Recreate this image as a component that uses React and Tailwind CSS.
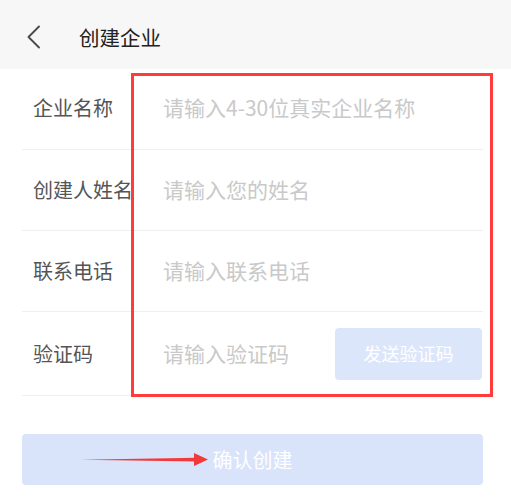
const rows = [
  { label: '企业名称', placeholder: '请输入4-30位真实企业名称' },
  { label: '创建人姓名', placeholder: '请输入您的姓名' },
  { label: '联系电话', placeholder: '请输入联系电话' },
  { label: '验证码', placeholder: '请输入验证码', code: true },
];

export default function App() {
  return (
    <div className="relative w-[511px] h-[499px] bg-white overflow-hidden font-['Noto_Sans_CJK_SC',sans-serif]">
      {/* header */}
      <div className="h-[69px] pt-[5px] bg-[#f7f7f7] flex items-center">
        <svg className="ml-[26px]" width="16" height="26" viewBox="0 0 16 26">
          <polyline points="13,2.5 2.5,13 13,23.5" fill="none" stroke="#4a4a4a" strokeWidth="1.9" strokeLinecap="round" strokeLinejoin="round" />
        </svg>
        <span className="ml-[37px] text-[20.5px] text-[#222]">创建企业</span>
      </div>

      {/* form */}
      <div className="ml-[22px] mr-[28px]">
        {rows.map((r, i) => (
          <div key={i} className={`flex items-center border-b border-[#efefef] ${i === 3 ? 'h-[84px]' : 'h-[81px]'}`}>
            <span className={`w-[141px] pl-[11px] text-[20px] text-[#555] whitespace-nowrap ${i === 0 ? 'mb-[2px]' : ''}`}>{r.label}</span>
            <span className={`flex-1 text-[21px] text-[#c9c9c9] whitespace-nowrap ${i === 0 ? 'mb-[3px]' : ''}`}>{r.placeholder}</span>
            {r.code && (
              <button className="w-[147px] h-[52px] mr-[1px] rounded-[4px] bg-[#dce6fb] text-white text-[18px]">
                发送验证码
              </button>
            )}
          </div>
        ))}
      </div>

      <div className="ml-[22px] mr-[28px] mt-[38px]">
        <button className="w-full h-[51px] rounded-[4px] bg-[#d9e4fb] text-white text-[20px]">确认创建</button>
      </div>

      {/* annotations */}
      <div className="absolute left-[131px] top-[73px] w-[362px] h-[324px] border-[3px] border-[#ff3b3b]" />
      <svg className="absolute left-[78px] top-[450px]" width="134" height="20" viewBox="0 0 134 20">
        <path d="M3 9.7 L119 7.8 L119 11.4 Z" fill="#f23a3a" />
        <path d="M116 3 L130 9.6 L116 16 Z" fill="#f23a3a" />
      </svg>
    </div>
  );
}
